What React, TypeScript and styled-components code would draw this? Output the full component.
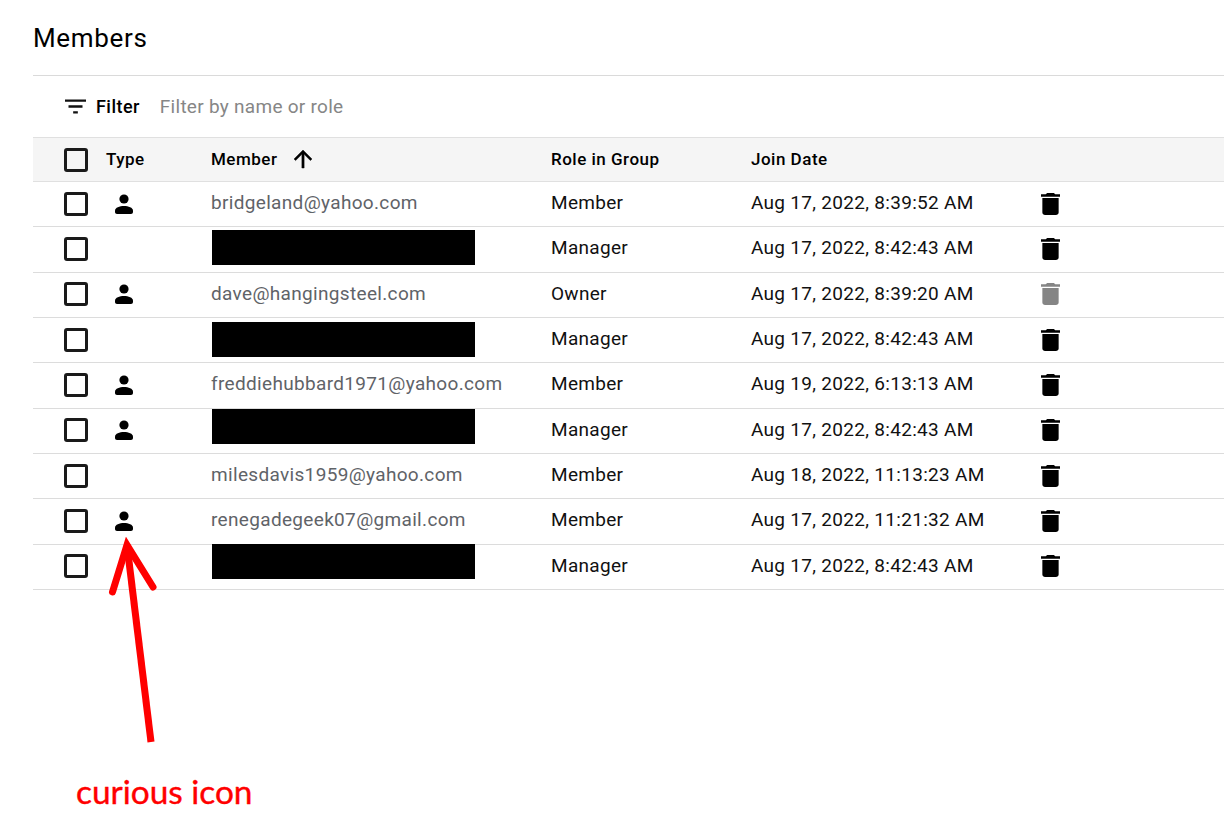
import React, { FC } from 'react';
import styled, { createGlobalStyle } from 'styled-components';

const members: MemberRow[] = [
	{ email: 'bridgeland@yahoo.com', person: true, role: 'Member', date: 'Aug 17, 2022, 8:39:52 AM' },
	{ blockTop: 3, role: 'Manager', date: 'Aug 17, 2022, 8:42:43 AM' },
	{ email: 'dave@hangingsteel.com', person: true, role: 'Owner', date: 'Aug 17, 2022, 8:39:20 AM', locked: true },
	{ blockTop: 4, role: 'Manager', date: 'Aug 17, 2022, 8:42:43 AM' },
	{ email: 'freddiehubbard1971@yahoo.com', person: true, role: 'Member', date: 'Aug 19, 2022, 6:13:13 AM' },
	{ blockTop: 0, person: true, role: 'Manager', date: 'Aug 17, 2022, 8:42:43 AM' },
	{ email: 'milesdavis1959@yahoo.com', role: 'Member', date: 'Aug 18, 2022, 11:13:23 AM' },
	{ email: 'renegadegeek07@gmail.com', person: true, role: 'Member', date: 'Aug 17, 2022, 11:21:32 AM' },
	{ blockTop: -1, role: 'Manager', date: 'Aug 17, 2022, 8:42:43 AM' },
];

const PersonIcon = () => (
	<PersonSvg viewBox="0 0 18 20" aria-hidden="true">
		<circle cx="9" cy="5" r="4.6" />
		<path d="M9 12C4.6 12 0 13.7 0 16.6V18c0 1.1.9 2 2 2h14c1.100 0 2-.9 2-2v-1.400C18 13.700 13.400 12 9 12z" />
	</PersonSvg>
);

const TrashIcon: FC<{ muted?: boolean }> = ({ muted }) => (
	<TrashSvg viewBox="5 3 14 18" preserveAspectRatio="none" $muted={muted} aria-hidden="true">
		<path d="M6 19c0 1.100.9 2 2 2h8c1.100 0 2-.9 2-2V7H6v12zM19 4h-3.500l-1-1h-5l-1 1H5v2h14V4z" />
	</TrashSvg>
);

export default function App() {
	return (
		<>
			<GlobalStyle />
			<Page>
				<Title>Members</Title>
				<FilterBar>
					<FilterSvg viewBox="3 6 18 12" aria-hidden="true">
						<path d="M10 18h4v-2h-4v2zM3 6v2h18V6H3zm3 7h12v-2H6v2z" />
					</FilterSvg>
					<FilterLabel>Filter</FilterLabel>
					<FilterHint>Filter by name or role</FilterHint>
				</FilterBar>
				<HeaderRow>
					<CheckCell>
						<CheckBox />
					</CheckCell>
					<HeaderCell>Type</HeaderCell>
					<HeaderCell>
						Member
						<SortSvg viewBox="4 4 16 16" aria-hidden="true">
							<path d="M4 12l1.410 1.410L11 7.830V20h2V7.830l5.580 5.590L20 12l-8-8-8 8z" />
						</SortSvg>
					</HeaderCell>
					<HeaderCell>Role in Group</HeaderCell>
					<HeaderCell>Join Date</HeaderCell>
				</HeaderRow>
				{members.map((m, i) => (
					<Row key={i}>
						<CheckCell>
							<CheckBox />
						</CheckCell>
						<TypeCell>{m.person && <PersonIcon />}</TypeCell>
						{m.email ? <Email>{m.email}</Email> : <Redacted $top={m.blockTop ?? 0} />}
						<BodyText>{m.role}</BodyText>
						<BodyText>{m.date}</BodyText>
						<TrashIcon muted={m.locked} />
					</Row>
				))}
				<Annotation viewBox="0 0 60 210" aria-hidden="true">
					<path d="M45 205L21 8" />
					<path d="M6.500 55L21 8L47 50" strokeLinecap="round" />
				</Annotation>
				<AnnotationText>curious icon</AnnotationText>
			</Page>
		</>
	);
}

interface MemberRow {
	email?: string;
	person?: boolean;
	blockTop?: number;
	role: string;
	date: string;
	locked?: boolean;
}

const GlobalStyle = createGlobalStyle`
	body {
		margin: 0;
		background: #fff;
		font-family: Roboto, 'Liberation Sans', sans-serif;
		color: #000;
	}
`;

const Page = styled.div`
	position: relative;
	width: 1224px;
	height: 838px;
	overflow: hidden;
	padding-left: 33px;
	box-sizing: border-box;
`;

const Title = styled.h1`
	margin: 0;
	height: 75px;
	line-height: 77px;
	font-size: 26px;
	font-weight: 400;
	letter-spacing: 0.65px;
	border-bottom: 1px solid #dadada;
`;

const FilterBar = styled.div`
	display: flex;
	align-items: center;
	height: 61px;
	padding-left: 32px;
`;

const FilterSvg = styled.svg`
	width: 21px;
	height: 15px;
	fill: #111;
	margin-right: 10px;
`;

const FilterLabel = styled.span`
	font-size: 18px;
	font-weight: 500;
	letter-spacing: 0.45px;
	margin-right: 20px;
	padding-bottom: 1px;
`;

const FilterHint = styled.span`
	font-size: 19px;
	letter-spacing: 0.28px;
	color: #868686;
	padding-bottom: 1px;
`;

const columns = '73px 105px 340px 200px 289px 1fr';

const HeaderRow = styled.div`
	display: grid;
	grid-template-columns: ${columns};
	align-items: center;
	height: 43px;
	background: #f5f5f5;
	border-top: 1px solid #e0e0e0;
	border-bottom: 1px solid #e0e0e0;
`;

const HeaderCell = styled.div`
	display: flex;
	align-items: center;
	font-size: 17px;
	font-weight: 500;
	letter-spacing: 0.5px;
	padding-bottom: 1px;
`;

const SortSvg = styled.svg`
	width: 18px;
	height: 20px;
	margin-left: 17px;
	fill: #000;
	stroke: #000;
	stroke-width: 0.4px;
`;

const Row = styled.div`
	display: grid;
	grid-template-columns: ${columns};
	align-items: center;
	height: 45.33px;
	box-sizing: border-box;
	padding-bottom: 1px;
	border-bottom: 1px solid #dcdcdc;
`;

const CheckCell = styled.div`
	padding-left: 31px;
	display: flex;
`;

const CheckBox = styled.span`
	display: block;
	width: 24px;
	height: 24px;
	box-sizing: border-box;
	border: 3px solid #1a1a1a;
	border-radius: 3px;
`;

const TypeCell = styled.div`
	display: flex;
	padding-left: 9px;
`;

const PersonSvg = styled.svg`
	width: 18px;
	height: 20px;
	fill: #000;
`;

const Email = styled.span`
	font-size: 19px;
	letter-spacing: 0.33px;
	color: #5f6368;
	padding-bottom: 2px;
`;

const Redacted = styled.div<{ $top: number }>`
	align-self: start;
	width: 263px;
	height: 35px;
	margin: ${p => p.$top}px 0 0 1px;
	background: #000;
`;

const BodyText = styled.span`
	font-size: 19px;
	letter-spacing: 0.3px;
	color: #111;
	padding-bottom: 2px;
`;

const TrashSvg = styled.svg<{ $muted?: boolean }>`
	width: 19px;
	height: 22px;
	margin-left: 1px;
	fill: ${p => (p.$muted ? '#858585' : '#000')};
`;

const Annotation = styled.svg`
	position: absolute;
	left: 106px;
	top: 537px;
	width: 60px;
	height: 210px;
	fill: none;
	stroke: #ff0000;
	stroke-width: 7px;
	stroke-linejoin: miter;
`;

const AnnotationText = styled.div`
	position: absolute;
	left: 76px;
	top: 771px;
	font-family: Lato, sans-serif;
	font-size: 33.4px;
	line-height: 40px;
	color: #ff0000;
	-webkit-text-stroke: 0.4px #ff0000;
`;
